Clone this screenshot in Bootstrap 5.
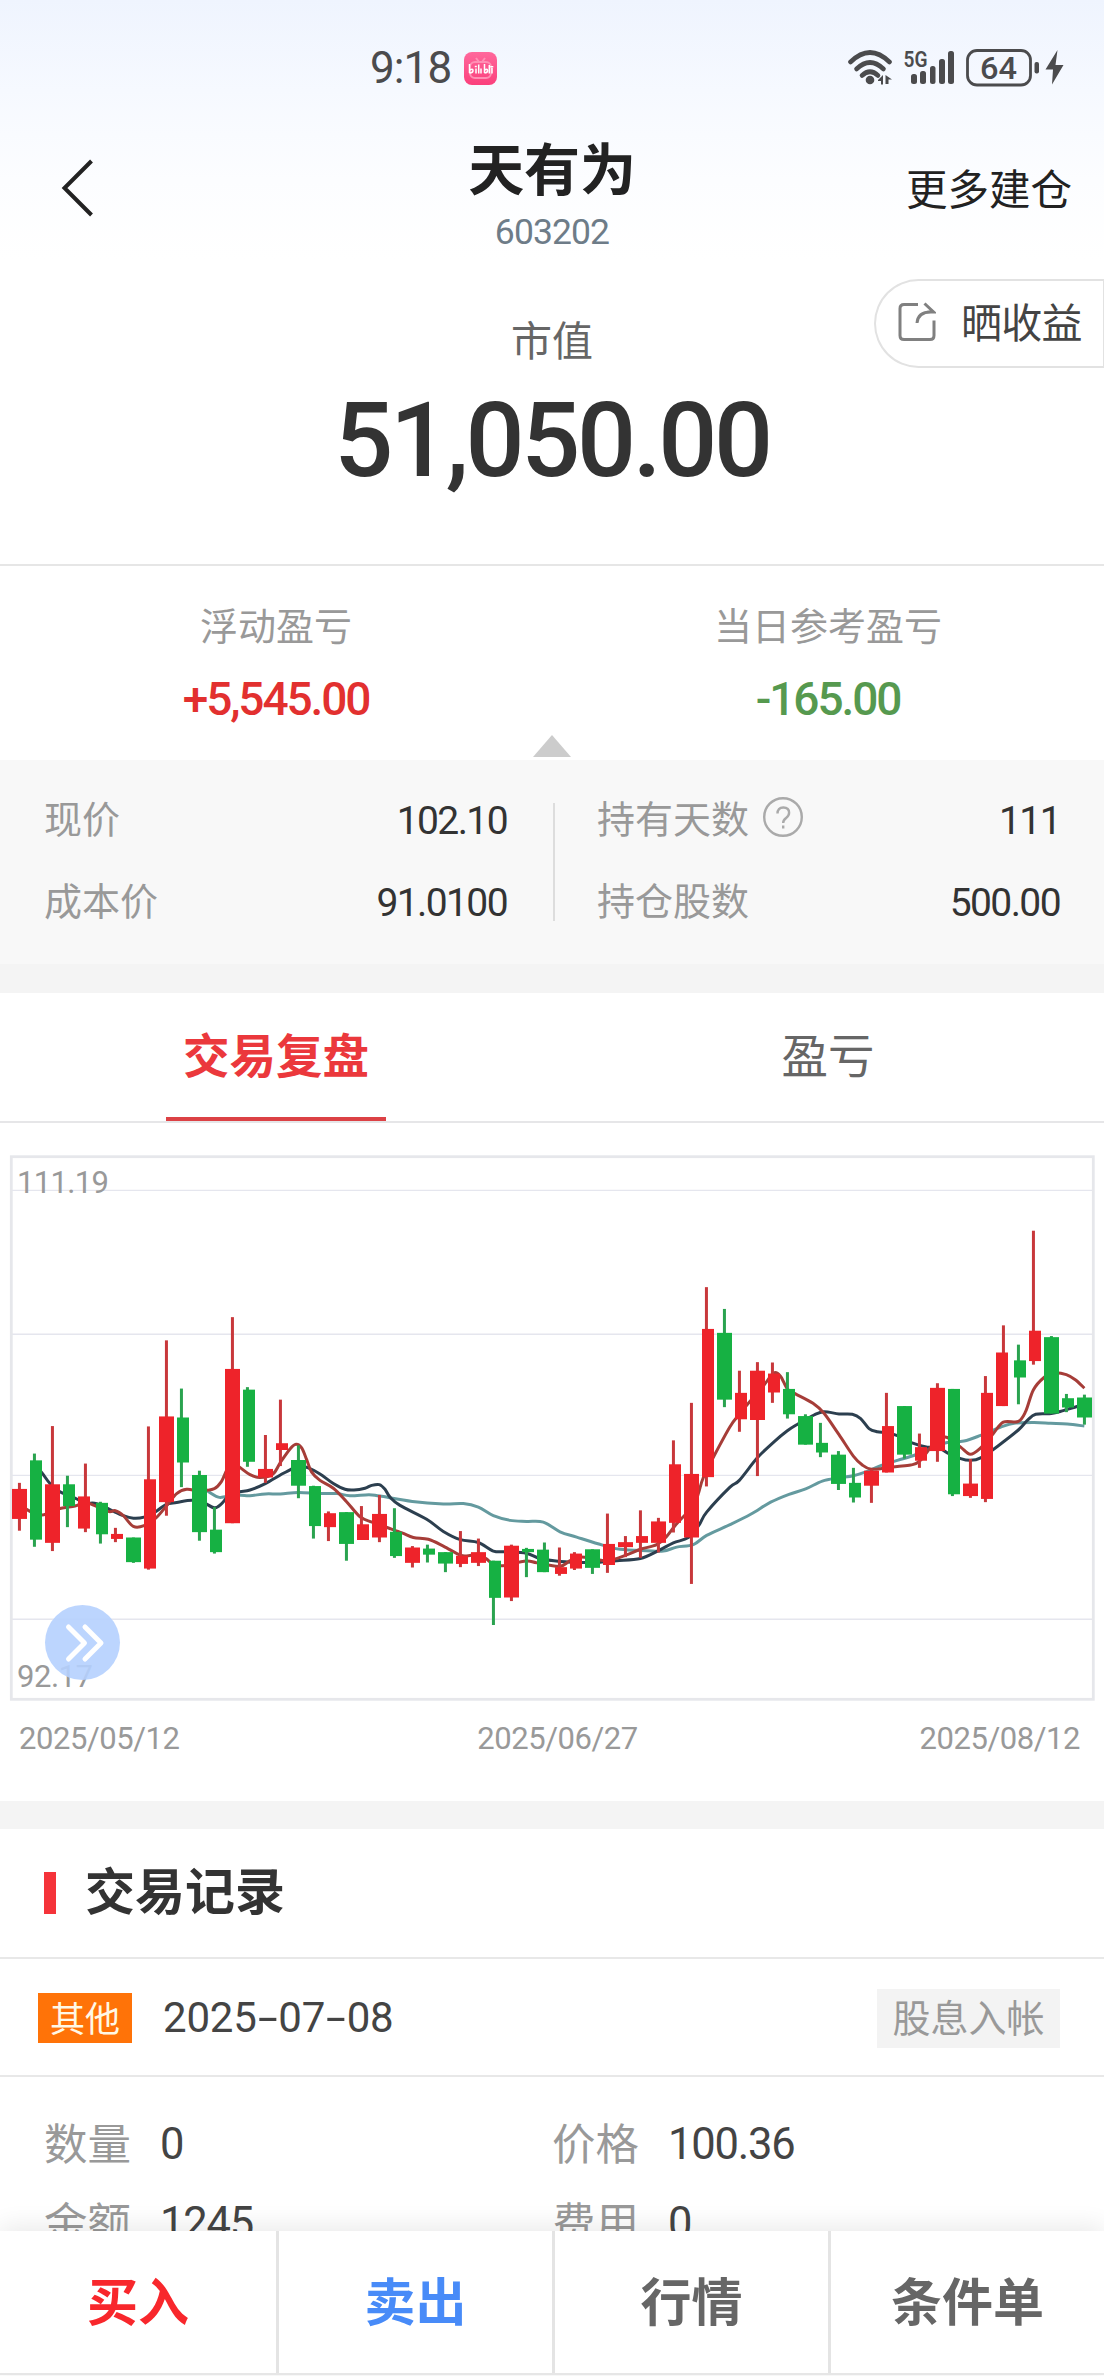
<!DOCTYPE html>
<html lang="zh-CN">
<head>
<meta charset="utf-8">
<meta name="viewport" content="width=device-width, initial-scale=1">
<title>天有为 603202</title>
<link href="https://cdn.jsdelivr.net/npm/bootstrap@5.3.0/dist/css/bootstrap.min.css" rel="stylesheet">
<style>
  html, body { height: 2376px; overflow: hidden; }
  body { font-family: "Noto Sans CJK SC", sans-serif; background: #fff; color: #333; line-height: 1; }
  .screen { height: 2376px; background: linear-gradient(#eff4fe 0, #f6f9ff 90px, #fcfdff 180px, #fff 260px); }
  .num { font-family: Roboto, "Noto Sans CJK SC", sans-serif; }
  .text-label { color: #999; }
  .statusbar { height: 136px; padding-left: 370px; padding-right: 40px; color: #4b4b4d; }
  .clock { font-size: 44px; letter-spacing: -.9px; width: 94px; }
  .topbar { height: 143px; }
  .topbar-side { width: 300px; height: 101px; margin-top: 1px; }
  .back-btn { margin-left: 52px; }
  .stock-name { font-size: 56px; height: 60px; line-height: 60px; font-weight: 700; color: #222; letter-spacing: -.2px; }
  .stock-code { font-size: 35.5px; letter-spacing: -.9px; color: #6e7c88; margin-top: 19px; }
  .more-btn { font-size: 41.5px; color: #222; }
  .value-block { height: 287px; border-bottom: 2px solid #e6e6e6; }
  .value-label { font-size: 41px; color: #666; margin-top: 38px; line-height: 42px; }
  .value-total { font-size: 104px; font-weight: 500; letter-spacing: -3.4px; line-height: 110px; margin-top: 27px; }
  .share-btn { top: 0; right: 0; width: 230px; height: 89px; border: 2px solid #e2e2e2; border-right-width: 1px; border-radius: 45px 0 0 45px; background: #fff; font-size: 41px; letter-spacing: -.8px; color: #444; padding: 0 0 4px 22px; gap: 25px; }
  .share-btn span { margin-top: -3px; }
  .pl-block { height: 194px; }
  .pl-label { font-size: 38px; line-height: 40px; margin-top: 38px; }
  .pl-value { font-size: 46px; font-weight: 500; line-height: 46px; letter-spacing: -2.1px; margin-top: 32px; }
  .c-up { color: #e2302f; } .c-down { color: #56994f; }
  .caret { left: 533px; top: 169px; }
  .detail { height: 204px; background: #f8f8f8; padding-top: 43px; }
  .detail-col { width: 553px; height: 118px; }
  .detail-col.left { padding-left: 44px; padding-right: 46px; border-right: 2px solid #ddd; width: 555px; }
  .detail-col.right { padding-left: 42px; padding-right: 44px; width: 549px; }
  .detail-item { font-size: 38px; height: 31px; }
  .detail-item + .detail-item { margin-top: 51px; }
  .detail-item .text-label { margin-top: -4px; }
  .detail-item .num { font-size: 39px; letter-spacing: -1.6px; margin-top: 6px; }
  .help { margin-left: 13px; }
  .band { background: #f4f4f4; height: 29px; }
  .tabs { height: 130px; border-bottom: 2px solid #e6e6e8; }
  .tabs .tab-item { font-size: 46.5px; color: #666; height: 128px; padding-bottom: 8px; background: none; border: 0; }
  .tabs .tab-item.active { color: #eb383c; font-weight: 700; }
  .tab-line { width: 220px; height: 4px; background: #dc4145; bottom: 0; left: 166px; }
  .chart { margin-top: 32px; height: 546px; }
  .axis { height: 100px; padding: 20px 24px 0 19px; font-size: 31px; letter-spacing: -.45px; line-height: 36px; }
  .axis .mid { margin-left: 16px; }
  .band.thin { height: 28px; }
  .sec-title { height: 130px; border-bottom: 2px solid #e8e8e8; padding-left: 44px; font-size: 50px; font-weight: 700; padding-bottom: 11px; gap: 29px; }
  .sec-bar { width: 12px; height: 42px; background: #f5333a; margin-top: 11px; }
  .rec-head { height: 118px; border-bottom: 2px solid #e8e8e8; padding: 2px 44px 0 38px; }
  .kind { width: 94px; height: 50px; background: #ff7308; color: #fff8e6; font-size: 35px; padding-bottom: 3px; }
  .rec-date { font-size: 42px; color: #444; letter-spacing: -.2px; margin-left: 31px; }
  .dash { display: inline-block; transform: scaleX(1.7); margin: 0 5px; letter-spacing: 0; }
  .rec-tag { width: 183px; height: 59px; background: #f3f3f3; font-size: 38px; padding-bottom: 4px; }
  .rec-body { height: 154px; overflow: hidden; padding: 43px 0 0 44px; font-size: 43.5px; }
  .rec-cell { width: 508px; height: 44px; margin-bottom: 35px; }
  .rec-cell .num { color: #444; font-size: 43.5px; letter-spacing: -1.2px; margin: 6px 0 0 29px; }
  .actions { height: 144px; background: #fff; border-bottom: 2px solid #e6e6e6; box-shadow: 0 -4px 24px rgba(0,0,0,.09); }
  .actions .act { width: 25%; font-size: 51px; font-weight: 700; color: #666; background: none; border: 0; padding: 0 0 6px; }
  .actions .act + .act { border-left: 3px solid #e4e4e4; }
  .actions .buy { color: #f8272c; } .actions .sell { color: #488bf8; }
  svg { display: block; flex: none; }
</style>
<script src="https://cdn.jsdelivr.net/npm/bootstrap@5.3.0/dist/js/bootstrap.bundle.min.js"></script>
</head>
<body>
<div class="screen d-flex flex-column">
  <div class="statusbar d-flex align-items-center justify-content-between">
    <div class="d-flex align-items-center">
      <span class="clock num">9:18</span>
      <svg width="33" height="33" viewBox="0 0 33 33"><defs><linearGradient id="bg" x1="0" y1="0" x2="0" y2="1"><stop offset="0" stop-color="#ff689c"/><stop offset="1" stop-color="#fb3f7c"/></linearGradient></defs><rect width="33" height="33" rx="8" fill="url(#bg)"/><g fill="none" stroke="#ff8fb4" stroke-width="2"><rect x="6" y="10" width="21" height="16" rx="5"/><path d="M12 6l3 4M21 6l-3 4"/></g><path d="M5.500 12v9M5.500 18.500q3.500-2.500 3.500 0t-3.500 2.500M12 16.500v5M14.700 12.500v9M17 16.500v5M20.500 12v9M20.500 18.500q3-2.500 3 0t-3 2.500M25.300 13v8.500M28 16v5.500M10.800 14.500h2M26.300 14.800h3" fill="none" stroke="#fff" stroke-width="1.500"/></svg>
    </div>
    <svg class="num" width="216" height="40" viewBox="848 48 216 40" fill="#4b4b4d">
      <g fill="none" stroke="#4b4b4d" stroke-width="4.600" stroke-linecap="round"><path d="M850.500 62Q870 43 889.500 62"/><path d="M856.500 69Q870 56 883.500 69"/><path d="M862 75.500Q870 68 878 75.500"/></g>
      <circle cx="870" cy="80" r="4.300"/><path d="M878 80l5-5v9.500h-2V81h-3zM885.500 75l6.500 4.500h-3.500V84h-3z"/>
      <text x="903.500" y="67" font-size="22" font-weight="600" textLength="24" lengthAdjust="spacingAndGlyphs">5G</text>
      <rect x="911" y="74" width="6" height="10" rx="2.500"/><rect x="920" y="71" width="6" height="13" rx="2.500"/><rect x="930" y="66" width="5.500" height="18" rx="2.500"/><rect x="939" y="59" width="6" height="25" rx="2.500"/><rect x="948" y="51" width="6" height="33" rx="2.500"/>
      <rect x="967.500" y="50.500" width="63" height="34.500" rx="9.500" fill="none" stroke="#4b4b4d" stroke-width="2.800"/>
      <text x="980" y="79" font-size="32" font-weight="500" textLength="37" lengthAdjust="spacingAndGlyphs">64</text>
      <rect x="1034.500" y="62" width="4.500" height="11.500" rx="2"/><path d="M1057.500 50L1045.500 69.500h7.500L1052 84.500L1063.500 65h-8z"/>
    </svg>
  </div>

  <div class="topbar d-flex justify-content-between">
    <div class="topbar-side d-flex align-items-center"><svg class="back-btn" width="52" height="60" viewBox="52 157 52 60" aria-label="返回"><path d="M91.500 160L64.500 187L91.500 214" fill="none" stroke="#222" stroke-width="4"/></svg></div>
    <div class="text-center"><div class="stock-name">天有为</div><div class="stock-code num">603202</div></div>
    <div class="topbar-side d-flex align-items-center justify-content-end pe-4"><a class="more-btn text-decoration-none me-1 pe-1">更多建仓</a></div>
  </div>

  <div class="value-block position-relative text-center">
    <div class="value-label pt-0">市值</div>
    <div class="value-total num">51,050.00</div>
    <button class="share-btn position-absolute d-flex align-items-center">
      <svg width="38" height="40" viewBox="897 301 38 40" fill="none" stroke="#808080" stroke-width="3"><path d="M917 303.500h-14q-4 0-4 4v27q0 4 4 4h26q4 0 4-4v-15"/><path d="M916 322q1-12 16-11M923.500 302.500l9 8.500h-6"/></svg>
      <span>晒收益</span>
    </button>
  </div>

  <div class="pl-block position-relative d-flex text-center">
    <div class="w-50"><div class="pl-label text-label">浮动盈亏</div><div class="pl-value num c-up">+5,545.00</div></div>
    <div class="w-50"><div class="pl-label text-label">当日参考盈亏</div><div class="pl-value num c-down">-165.00</div></div>
    <svg class="caret position-absolute" width="38" height="22"><path d="M19 0L38 22H0z" fill="#ccc"/></svg>
  </div>

  <div class="detail d-flex">
    <div class="detail-col left">
      <div class="detail-item d-flex justify-content-between align-items-center"><span class="text-label">现价</span><span class="num">102.10</span></div>
      <div class="detail-item d-flex justify-content-between align-items-center"><span class="text-label">成本价</span><span class="num">91.0100</span></div>
    </div>
    <div class="detail-col right">
      <div class="detail-item d-flex justify-content-between align-items-center"><span class="text-label d-flex align-items-center">持有天数
        <svg class="help" width="42" height="42" fill="none" stroke="#aaa" stroke-width="2.400"><circle cx="21" cy="21" r="18.800"/><path d="M15.500 17.500q0-6 5.800-6t5.800 5.300q0 3-3 5.200t-2.900 5M21.200 29.500v3"/></svg></span><span class="num">111</span></div>
      <div class="detail-item d-flex justify-content-between align-items-center"><span class="text-label">持仓股数</span><span class="num">500.00</span></div>
    </div>
  </div>
  <div class="band"></div>

  <div class="tabs d-flex position-relative">
    <button class="tab-item active w-50">交易复盘</button>
    <button class="tab-item w-50">盈亏</button>
    <div class="tab-line position-absolute"></div>
  </div>

  <div class="chart">
    <svg class="num" id="kline" width="1104" height="546" viewBox="0 1155 1104 546">
      <g stroke="#e5e6ee" stroke-width="1.400"><path d="M12 1190.400H1093M12 1334.300H1093M12 1475.400H1093M12 1619.300H1093"/></g>
      <rect x="11.300" y="1156.700" width="1082" height="542.600" fill="none" stroke="#e6e7eb" stroke-width="2.800"/>
      <g id="averages" fill="none" stroke-width="3"></g>
      <g id="candles"></g>
      <g fill="#999" font-size="31"><text x="17" y="1192.500" textLength="92">111.19</text><text x="17" y="1687" textLength="76">92.17</text></g>
      <circle cx="82.500" cy="1642.500" r="37.500" fill="#b5d0fe" fill-opacity=".9"/>
      <path d="M68.500 1627L84.500 1643L68.500 1659M85 1627L101 1643L85 1659" fill="none" stroke="#fff" stroke-width="5" stroke-linecap="round" stroke-linejoin="round"/>
    </svg>
  </div>
  <div class="axis num text-label d-flex justify-content-between"><span>2025/05/12</span><span class="mid">2025/06/27</span><span>2025/08/12</span></div>
  <div class="band thin"></div>

  <div class="sec-title d-flex align-items-center"><span class="sec-bar"></span><span>交易记录</span></div>
  <div class="rec-head d-flex align-items-center">
    <span class="kind d-flex align-items-center justify-content-center">其他</span>
    <span class="rec-date num">2025<span class="dash">-</span>07<span class="dash">-</span>08</span>
    <span class="rec-tag text-label d-flex align-items-center justify-content-center ms-auto">股息入帐</span>
  </div>
  <div class="rec-body d-flex flex-wrap">
    <div class="rec-cell d-flex align-items-center"><span class="text-label">数量</span><span class="num">0</span></div>
    <div class="rec-cell d-flex align-items-center"><span class="text-label">价格</span><span class="num">100.36</span></div>
    <div class="rec-cell d-flex align-items-center"><span class="text-label">金额</span><span class="num">1245</span></div>
    <div class="rec-cell d-flex align-items-center"><span class="text-label">费用</span><span class="num">0</span></div>
  </div>
  <div class="actions d-flex position-relative">
    <button class="act buy">买入</button>
    <button class="act sell">卖出</button>
    <button class="act">行情</button>
    <button class="act">条件单</button>
  </div>
</div>
<script>
// Each candle: colour, body left, body right, wick x, high, body top, body bottom, low
const candles = `r 36 81 58 960 977 1061 1094|g 90 126 103 878 897 1119 1139|r 135 180 157 801 964 1128 1151|g 189 225 202 940 964 1025 1084|r 234 270 256 906 998 1088 1098|g 288 324 301 1013 1016 1104 1130|r 333 369 346 1086 1103 1117 1126|g 378 423 400 1113 1113 1182 1184|r 432 468 445 802 950 1200 1203|r 477 522 499 561 774 1014 1052|g 531 567 544 696 777 903 972|g 576 621 598 926 938 1098 1122|g 630 666 643 1028 1091 1154 1158|r 675 720 697 496 641 1073 1073|g 729 765 742 692 699 901 915|r 774 819 796 826 921 945 960|r 828 864 841 727 849 868 913|g 873 918 895 855 896 968 1003|g 927 963 940 968 969 1081 1116|r 972 1008 985 1040 1045 1084 1123|g 1017 1062 1039 1042 1042 1131 1178|r 1071 1107 1084 1025 1076 1120 1120|r 1116 1161 1138 994 1047 1113 1126|g 1170 1206 1183 1031 1097 1165 1170|r 1215 1260 1237 1137 1141 1184 1197|g 1269 1305 1282 1133 1144 1161 1183|g 1314 1359 1336 1154 1154 1186 1210|r 1368 1404 1381 1095 1164 1187 1196|r 1413 1458 1435 1116 1154 1184 1193|g 1467 1503 1480 1178 1178 1282 1358|r 1512 1557 1534 1133 1136 1281 1291|g 1566 1602 1579 1142 1145 1154 1224|g 1611 1647 1633 1127 1147 1210 1210|r 1665 1701 1678 1141 1196 1215 1220|r 1710 1746 1723 1154 1158 1200 1204|g 1755 1800 1777 1146 1146 1198 1215|r 1809 1845 1822 1046 1131 1190 1212|r 1854 1899 1876 1109 1126 1140 1168|r 1908 1944 1921 1037 1109 1128 1170|r 1953 1998 1975 1058 1068 1128 1155|r 2007 2043 2020 841 908 1072 1099|r 2052 2097 2074 736 935 1113 1243|r 2106 2142 2119 412 529 944 970|g 2151 2196 2173 473 540 727 748|r 2205 2241 2218 646 708 782 817|r 2250 2295 2272 622 646 784 941|r 2304 2340 2317 623 654 707 736|g 2349 2385 2362 650 697 768 780|g 2394 2439 2416 768 773 853 853|g 2448 2484 2461 792 848 875 888|g 2493 2538 2515 871 881 963 980|g 2547 2583 2560 918 960 1001 1015|r 2592 2637 2614 922 926 968 1016|r 2646 2682 2659 708 801 931 931|g 2691 2736 2713 745 745 881 892|r 2745 2781 2758 822 860 898 918|r 2790 2835 2812 681 694 871 901|g 2844 2880 2857 697 697 992 997|r 2889 2934 2911 893 962 997 1002|r 2943 2979 2956 661 708 1005 1014|r 2988 3024 3010 519 595 745 745|g 3042 3078 3055 573 617 665 740|r 3087 3123 3100 254 534 619 629|g 3132 3177 3154 549 552 766 766|g 3186 3222 3199 711 723 749 762|g 3231 3276 3253 713 721 777 797`;
const averages = {
  '#649a9f': '598 960 622 982 655 1000 680 998 720 995 750 996 796 991 841 991 895 987 960 990 1010 990 1050 996 1107 993 1140 997 1237 1012 1330 1019 1390 1018 1435 1028 1480 1052 1530 1065 1580 1068 1630 1070 1680 1097 1730 1112 1810 1135 1860 1146 1940 1150 1990 1151 2030 1140 2080 1133 2120 1107 2190 1077 2252 1048 2312 1014 2367 992 2417 977 2467 955 2515 946 2560 940 2602 928 2642 912 2692 897 2745 882 2792 862 2842 847 2892 843 2942 827 3002 804 3042 793 3102 791 3152 793 3202 795 3253 801',
  '#2c3f4f': '103 908 126 932 150 962 180 985 225 1003 256 1016 290 1018 330 1035 370 1052 400 1059 432 1056 468 1040 499 1020 530 1015 576 1009 610 1015 643 1030 665 1018 690 992 720 985 750 980 796 962 841 938 873 922 900 913 925 918 960 935 1000 962 1035 978 1062 980 1095 975 1115 967 1138 965 1155 978 1170 1000 1200 1023 1280 1062 1330 1096 1381 1119 1435 1127 1480 1151 1520 1153 1579 1157 1620 1172 1680 1180 1760 1183 1800 1182 1850 1178 1921 1172 1975 1150 2020 1128 2065 1113 2097 1078 2120 1042 2190 972 2218 953 2272 890 2322 845 2362 814 2394 795 2442 770 2472 761 2517 767 2557 768 2582 780 2607 808 2632 817 2659 819 2692 828 2736 848 2782 860 2812 860 2842 876 2882 892 2911 897 2942 890 2992 858 3055 812 3082 785 3107 768 3154 766 3192 757 3253 740',
  '#a63d38': '58 1010 81 1035 126 1050 180 1032 225 1025 250 1015 270 1018 324 1040 346 1038 370 1052 400 1082 432 1080 468 1058 499 1025 530 990 560 978 598 982 643 976 665 955 680 925 697 905 720 917 750 937 780 945 819 935 841 903 870 865 888 852 905 862 920 895 935 930 960 953 1000 975 1039 1012 1080 1055 1116 1070 1161 1085 1206 1100 1240 1113 1285 1118 1330 1137 1380 1162 1405 1164 1435 1160 1458 1172 1480 1188 1505 1192 1520 1190 1579 1179 1611 1184 1678 1194 1710 1178 1740 1168 1780 1172 1822 1178 1876 1163 1921 1146 1970 1133 1998 1112 2025 1080 2055 1050 2080 1030 2095 990 2110 945 2142 885 2190 803 2218 768 2247 735 2272 710 2297 680 2322 652 2342 662 2362 697 2385 710 2439 737 2472 765 2517 825 2560 885 2587 910 2614 922 2659 918 2692 914 2732 910 2758 900 2792 860 2812 835 2842 833 2882 860 2911 880 2942 862 2979 823 3010 790 3055 788 3077 760 3100 700 3132 665 3162 652 3199 657 3227 672 3253 695'
};
const px = v => v / 3, py = v => 1140 + v / 2.8;
const bodyFill = { r: '#ee232a', g: '#16b143' }, wickFill = { r: '#c8383b', g: '#2aa34f' };
document.getElementById('candles').innerHTML = candles.split('|').map(row => {
  const p = row.split(' '), c = p[0], [l, r, w, hi, t, b, lo] = p.slice(1).map(Number);
  return `<rect x="${px(w) - 1.4}" y="${py(hi)}" width="3" height="${(lo - hi) / 2.8}" fill="${wickFill[c]}"/>` +
         `<rect x="${px(l)}" y="${py(t)}" width="${px(r - l)}" height="${(b - t) / 2.8}" fill="${bodyFill[c]}"/>`;
}).join('');
document.getElementById('averages').innerHTML = Object.entries(averages).map(([color, str]) => {
  const n = str.split(' ').map(Number), pts = [];
  for (let i = 0; i < n.length; i += 2) pts.push([px(n[i]), py(n[i + 1])]);
  let d = `M${pts[0]}`;
  for (let i = 0; i < pts.length - 1; i++) {
    const a = pts[i - 1] || pts[i], b = pts[i], c = pts[i + 1], e = pts[i + 2] || c;
    d += `C${b[0] + (c[0] - a[0]) / 6},${b[1] + (c[1] - a[1]) / 6} ${c[0] - (e[0] - b[0]) / 6},${c[1] - (e[1] - b[1]) / 6} ${c}`;
  }
  return `<path d="${d}" stroke="${color}"/>`;
}).join('');
</script>
</body>
</html>
